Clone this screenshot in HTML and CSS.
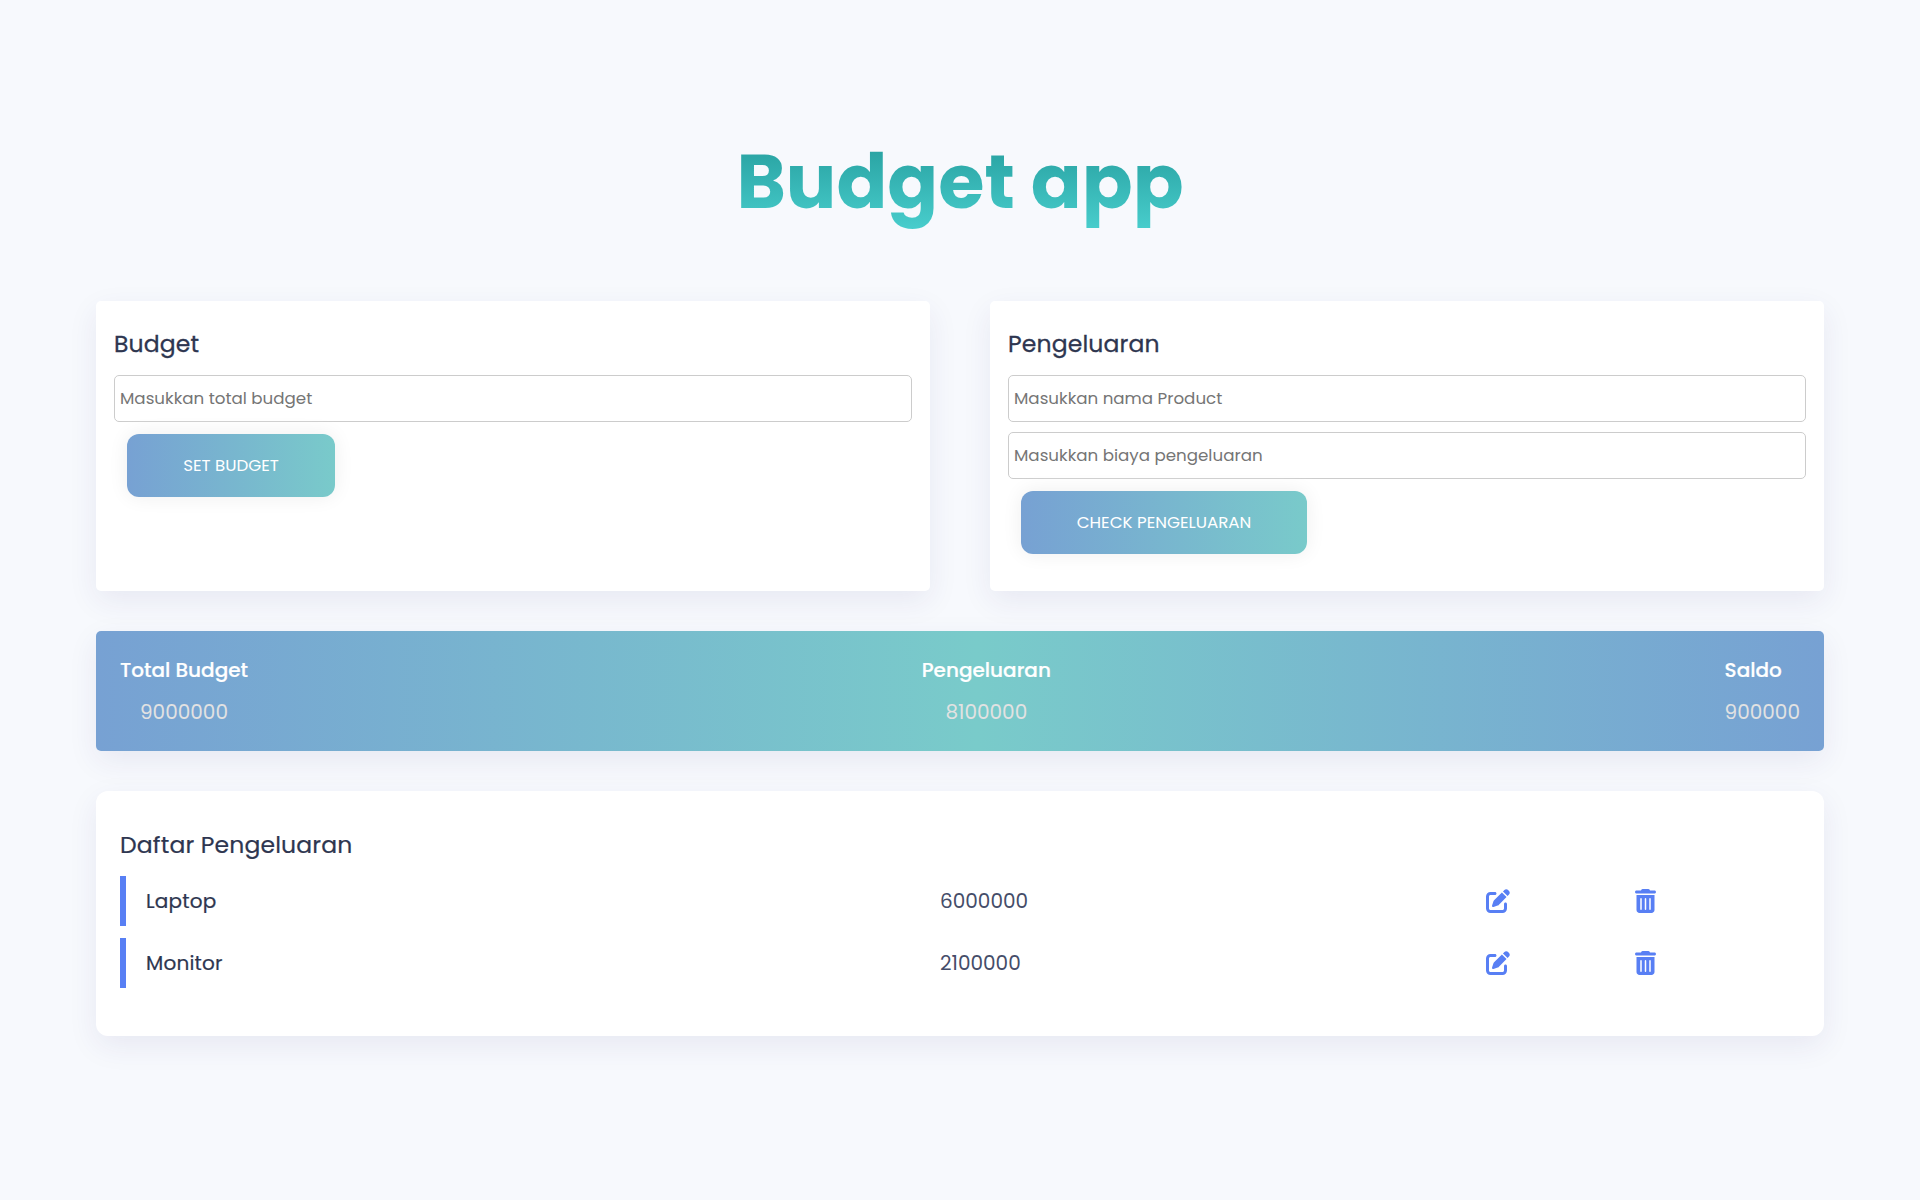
FILE: index.html
```html
<!DOCTYPE html>
<html lang="id">
<head>
<meta charset="utf-8">
<title>Budget app</title>
<link rel="stylesheet" href="styles.css">
</head>
<body>
<svg class="sprite" aria-hidden="true">
  <symbol id="edit" viewBox="0 0 512 512"><path d="M471.6 21.7c-21.9-21.9-57.3-21.9-79.2 0L362.3 51.7l97.9 97.9 30.1-30.1c21.9-21.9 21.9-57.3 0-79.2L471.6 21.7zm-299.2 220c-6.1 6.1-10.8 13.6-13.5 21.9l-29.6 88.8c-2.9 8.6-.6 18.1 5.8 24.6s15.9 8.7 24.6 5.8l88.8-29.6c8.2-2.7 15.7-7.4 21.9-13.5L437.7 172.3 339.7 74.3 172.4 241.7zM96 64C43 64 0 107 0 160V416c0 53 43 96 96 96H352c53 0 96-43 96-96V320c0-17.7-14.3-32-32-32s-32 14.3-32 32v96c0 17.7-14.3 32-32 32H96c-17.7 0-32-14.3-32-32V160c0-17.7 14.3-32 32-32h96c17.7 0 32-14.3 32-32s-14.3-32-32-32H96z"/></symbol>
  <symbol id="trash" viewBox="0 0 448 512"><path fill-rule="evenodd" d="M135.2 17.7C140.6 6.8 151.7 0 163.8 0H284.2c12.1 0 23.2 6.8 28.6 17.7L320 32h96c17.7 0 32 14.3 32 32s-14.3 32-32 32H32C14.3 96 0 81.7 0 64S14.3 32 32 32h96l7.2-14.3zM32 128H416V448c0 35.3-28.7 64-64 64H96c-35.3 0-64-28.7-64-64V128zm96 64c-8.8 0-16 7.2-16 16V432c0 8.8 7.2 16 16 16s16-7.2 16-16V208c0-8.8-7.2-16-16-16zm96 0c-8.8 0-16 7.2-16 16V432c0 8.8 7.2 16 16 16s16-7.2 16-16V208c0-8.8-7.2-16-16-16zm96 0c-8.8 0-16 7.2-16 16V432c0 8.8 7.2 16 16 16s16-7.2 16-16V208c0-8.8-7.2-16-16-16z"/></symbol>
</svg>
<main class="wrapper">
  <h1 class="title">Budget app</h1>
  <div class="forms">
    <section class="card">
      <h2 class="card-title">Budget</h2>
      <input class="field" type="text" placeholder="Masukkan total budget">
      <button class="btn btn-budget">Set Budget</button>
    </section>
    <section class="card">
      <h2 class="card-title">Pengeluaran</h2>
      <input class="field" type="text" placeholder="Masukkan nama Product">
      <input class="field" type="text" placeholder="Masukkan biaya pengeluaran">
      <button class="btn btn-check">Check Pengeluaran</button>
    </section>
  </div>
  <section class="summary">
    <div class="stat"><p class="stat-label">Total Budget</p><span class="stat-value">9000000</span></div>
    <div class="stat"><p class="stat-label">Pengeluaran</p><span class="stat-value">8100000</span></div>
    <div class="stat stat-left"><p class="stat-label">Saldo</p><span class="stat-value">900000</span></div>
  </section>
  <section class="list">
    <h2 class="list-title">Daftar Pengeluaran</h2>
    <div class="row">
      <p class="name">Laptop</p>
      <p class="amount">6000000</p>
      <div class="actions"><svg class="icon-edit"><use href="#edit"/></svg><svg class="icon-trash"><use href="#trash"/></svg></div>
    </div>
    <div class="row">
      <p class="name">Monitor</p>
      <p class="amount">2100000</p>
      <div class="actions"><svg class="icon-edit"><use href="#edit"/></svg><svg class="icon-trash"><use href="#trash"/></svg></div>
    </div>
  </section>
</main>
</body>
</html>
```
FILE: styles.css
```css
* { margin: 0; padding: 0; box-sizing: border-box; }
body { min-height: 100vh; background: #f7f9fd; font-family: Poppins, Inter, sans-serif; color: #2e3650; }
.sprite { display: none; }
.wrapper { width: 90%; margin: 0 auto; padding: 122px 0 100px; }

.title {
  font-size: 75px; font-weight: 700; line-height: 120px; text-align: center;
  background: linear-gradient(#1f9595, #4dd4d3); background-clip: text; -webkit-background-clip: text; color: transparent;
}

.forms { display: grid; grid-template-columns: 1fr 1fr; gap: 60px; margin-top: 59px; }
.card { height: 290px; padding: 25px 18px 24px; background: #fff; border-radius: 5px; box-shadow: 0 10px 30px rgba(50, 40, 120, .08); }
.card-title { font-size: 23.5px; font-weight: 400; line-height: 36px; letter-spacing: .15px; margin-bottom: 13px; -webkit-text-stroke: .3px; }
.field { display: block; width: 100%; height: 47px; margin-bottom: 10px; padding: 0 5px 2px; border: 1px solid #ccc; border-radius: 5px; font: 400 16.7px Poppins, Inter, sans-serif; }
.field::placeholder { color: #757575; }
.btn {
  display: block; height: 63px; margin: 12px 0 0 13px; padding-bottom: 2px; border: 0; border-radius: 12px; color: #fff;
  font: 400 16.7px Poppins, Inter, sans-serif; text-transform: uppercase; box-shadow: 0 0 20px #eee;
  background: linear-gradient(to right, #77a1d3 0%, #79cbca 51%, #77a1d3 100%); background-size: 200% auto;
}
.btn-budget { width: 208px; }
.btn-check { width: 286px; }

.summary {
  display: flex; justify-content: space-between; height: 120px; margin-top: 40px; padding: 24px;
  border-radius: 5px; color: #fff; box-shadow: 0 10px 30px rgba(50, 40, 120, .08);
  background: linear-gradient(to right, #77a1d3 0%, #79cbca 51%, #77a1d3 100%);
}
.stat { display: flex; flex-direction: column; align-items: center; gap: 12px; font-size: 20px; line-height: 30px; }
.stat-label { font-weight: 500; -webkit-text-stroke: .2px; }
.stat-value { color: #e2e2e2; }
.stat-left { align-items: flex-start; }

.list { height: 245px; margin-top: 40px; padding: 36px 24px; background: #fff; border-radius: 12px; box-shadow: 0 10px 30px rgba(50, 40, 120, .08); }
.list-title { font-size: 23.5px; font-weight: 400; line-height: 36px; letter-spacing: .15px; margin-bottom: 13px; -webkit-text-stroke: .2px; }
.row { display: grid; grid-template-columns: 814px 546px 1fr; align-items: center; height: 50px; margin-bottom: 12px; border-left: 6px solid #587ff4; font-size: 20px; }
.name { padding-left: 20px; letter-spacing: .2px; -webkit-text-stroke: .2px; }
.amount { color: #454d69; }
.actions { display: flex; align-items: center; gap: 125px; fill: #587ff4; }
.icon-edit { width: 24px; height: 24px; }
.icon-trash { width: 21px; height: 24px; }
```
